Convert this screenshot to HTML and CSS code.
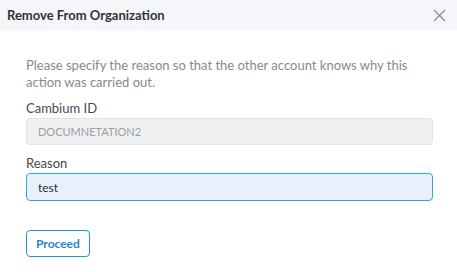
FILE: index.html
```html
<!DOCTYPE html>
<html lang="en">
<head>
    <meta charset="UTF-8">
    <meta name="viewport" content="width=device-width, initial-scale=1.0">
    <title>Remove From Organization</title>
    <link rel="stylesheet" href="styles.css">
</head>
<body>

    <div class="modal">
        <div class="modal-header">
            <h2>Remove From Organization</h2>
            <button class="close-btn" type="button" aria-label="Close">
                <svg width="13" height="13" viewBox="0 0 13 13">
                    <path d="M1 1 L12 12 M12 1 L1 12" stroke="#8c8f94" stroke-width="1.4" fill="none"/>
                </svg>
            </button>
        </div>

        <div class="modal-body">
            <p class="description">Please specify the reason so that the other account knows why this action was carried out.</p>

            <form id="removeForm">
                <label for="cambiumId">Cambium ID</label>
                <input type="text" id="cambiumId" class="readonly" value="DOCUMNETATION2" readonly />

                <label for="reason">Reason</label>
                <input type="text" id="reason" class="active" value="test" />

                <button type="submit" class="proceed">Proceed</button>
            </form>
        </div>
    </div>

</body>
</html>
```

FILE: styles.css
```css
* {
    margin: 0;
    padding: 0;
    box-sizing: border-box;
}

body {
    font-family: Lato, "Open Sans", Arial, sans-serif;
    background-color: #ffffff;
    color: #333;
    width: 457px;
    height: 272px;
    overflow: hidden;
}

.modal-header {
    height: 30px;
    background-color: #f5f6fa;
    display: flex;
    align-items: center;
    justify-content: space-between;
    padding: 0 11px 0 7px;
}

.modal-header h2 {
    font-size: 13px;
    font-weight: bold;
    color: #2f3337;
}

.close-btn {
    background: none;
    border: none;
    display: flex;
    cursor: pointer;
}

.modal-body {
    padding: 27px 24px 0 26px;
}

.description {
    font-size: 13px;
    line-height: 17px;
    color: #858a93;
    margin-bottom: 9px;
}

label {
    display: block;
    font-size: 13px;
    line-height: 16px;
    color: #45494e;
    margin-bottom: 2px;
}

input {
    width: 100%;
    height: 27px;
    padding: 0 11px;
    border-radius: 4px;
    font-family: inherit;
    margin-bottom: 10px;
    outline: none;
}

input.readonly {
    background-color: #eff0f2;
    border: 1px solid #e1e3e6;
    color: #9a9ea4;
    font-size: 11px;
}

input.active {
    height: 28px;
    background-color: #e8f0fc;
    border: 1px solid #2ea8dc;
    color: #2b2f33;
    font-size: 12px;
}

.proceed {
    display: block;
    margin-top: 19px;
    height: 27px;
    padding: 0 9px;
    background-color: #fff;
    border: 1.5px solid #1a97dd;
    border-radius: 4px;
    color: #2a86d1;
    font-family: inherit;
    font-weight: bold;
    font-size: 12px;
    cursor: pointer;
}
```
